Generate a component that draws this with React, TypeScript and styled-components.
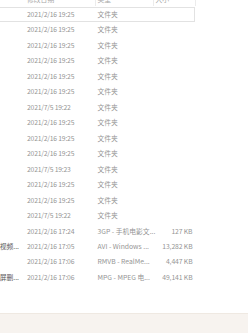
import React from 'react';
import styled, { createGlobalStyle } from 'styled-components';

const GlobalStyle = createGlobalStyle`
  html, body {
    margin: 0;
    padding: 0;
    background: #ffffff;
  }
  body {
    font-family: "Noto Sans CJK SC", "Noto Sans", sans-serif;
  }
`;

const Window = styled.div`
  width: 248px;
  height: 333px;
  display: flex;
  flex-direction: column;
  overflow: hidden;
  background: #ffffff;
`;

const List = styled.div`
  flex: 1;
  margin-top: -8px;
  display: flex;
  flex-direction: column;
`;

const Grid = styled.div<{ $selected?: boolean }>`
  display: grid;
  grid-template-columns: 25px 68.5px 56px 40px;
  column-gap: 2px;
  align-items: center;
  width: 195px;
  height: 15.47px;
  box-sizing: border-box;
  font-size: 6.8px;
  line-height: 1.4;
  color: #959595;
  white-space: nowrap;
  border: 1px solid ${p => (p.$selected ? '#e2e2e2' : 'transparent')};
  border-left: none;
`;

const HeaderRow = styled(Grid)`
  height: 15px;
  color: #a8a8a8;
`;

const HeaderCell = styled.div<{ $divider?: boolean }>`
  height: 100%;
  display: flex;
  align-items: center;
  border-right: 1px solid ${p => (p.$divider ? '#ececec' : 'transparent')};
`;

const NameCell = styled.div`
  display: flex;
  justify-content: flex-end;
  overflow: hidden;
  padding-right: 6px;
  color: #5a5a5a;
`;

const DateCell = styled.div`
  letter-spacing: -0.2px;
`;

const Cell = styled.div``;

const SizeCell = styled.div`
  text-align: right;
  padding-right: 3px;
  letter-spacing: -0.1px;
`;

const StatusBar = styled.div`
  height: 19px;
  flex-shrink: 0;
  background: #f7f3ef;
  border-top: 1px solid #efe9e2;
`;

type Row = { name?: string; date: string; type: string; size?: string };

const rows: Row[] = [
  { date: '2021/2/16 19:25', type: '文件夹' },
  { date: '2021/2/16 19:25', type: '文件夹' },
  { date: '2021/2/16 19:25', type: '文件夹' },
  { date: '2021/2/16 19:25', type: '文件夹' },
  { date: '2021/2/16 19:25', type: '文件夹' },
  { date: '2021/2/16 19:25', type: '文件夹' },
  { date: '2021/7/5 19:22', type: '文件夹' },
  { date: '2021/2/16 19:25', type: '文件夹' },
  { date: '2021/2/16 19:25', type: '文件夹' },
  { date: '2021/2/16 19:25', type: '文件夹' },
  { date: '2021/7/5 19:23', type: '文件夹' },
  { date: '2021/2/16 19:25', type: '文件夹' },
  { date: '2021/2/16 19:25', type: '文件夹' },
  { date: '2021/7/5 19:22', type: '文件夹' },
  { date: '2021/2/16 17:24', type: '3GP - 手机电影文...', size: '127 KB' },
  { name: '短视频...', date: '2021/2/16 17:05', type: 'AVI - Windows ...', size: '13,282 KB' },
  { date: '2021/2/16 17:06', type: 'RMVB - RealMe...', size: '4,447 KB' },
  { name: '录屏删...', date: '2021/2/16 17:06', type: 'MPG - MPEG 电...', size: '49,141 KB' },
];

const App: React.FC = () => {
  return (
    <>
      <GlobalStyle />
      <Window>
        <List>
          <HeaderRow>
            <HeaderCell />
            <HeaderCell $divider>修改日期</HeaderCell>
            <HeaderCell $divider>类型</HeaderCell>
            <HeaderCell $divider>大小</HeaderCell>
          </HeaderRow>
          {rows.map((row, i) => (
            <Grid key={i} $selected={i === 0}>
              <NameCell>{row.name ?? ''}</NameCell>
              <DateCell>{row.date}</DateCell>
              <Cell>{row.type}</Cell>
              <SizeCell>{row.size ?? ''}</SizeCell>
            </Grid>
          ))}
        </List>
        <StatusBar />
      </Window>
    </>
  );
};

export default App;
